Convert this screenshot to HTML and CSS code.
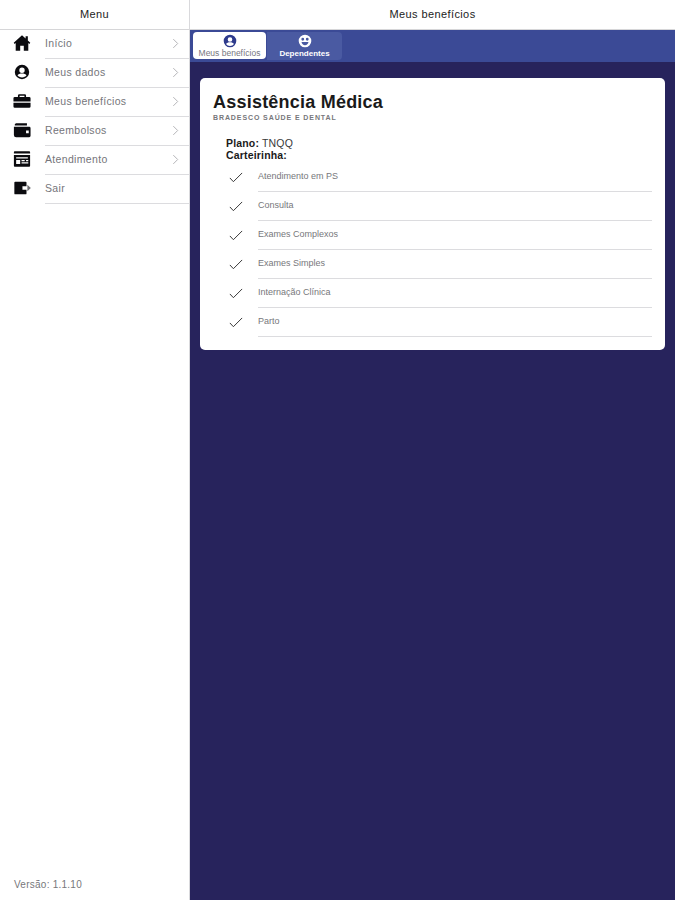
FILE: index.html
```html
<!DOCTYPE html>
<html lang="pt-BR">
<head>
<meta charset="utf-8">
<title>Meus benefícios</title>
<link rel="stylesheet" href="styles.css">
</head>
<body>
<div class="app">
  <aside class="sidebar">
    <header class="bar">Menu</header>
    <nav class="menu">
      <a class="menu-row">
        <svg class="menu-icon" viewBox="0 0 20 20"><path d="M10 1.500 .8 9.800l1 1.200L3 10V18.500h5v-5.500h4v5.500h5V10l1.200 1 1-1.200L16.500 7.200V2.500h-2.500v2.500z"/></svg>
        <span class="menu-body"><span class="menu-text">Início</span><svg class="chev" viewBox="0 0 8 12"><path d="M1.500 1 6.500 6 1.500 11"/></svg></span>
      </a>
      <a class="menu-row">
        <svg class="menu-icon" viewBox="0 0 20 20"><path fill-rule="evenodd" d="M10 2a8 8 0 1 0 0 16 8 8 0 0 0 0-16zm0 3a3 3 0 1 1 0 6 3 3 0 0 1 0-6zm0 11c-2.200 0-4-.9-5-2.400.7-1.400 2.800-2 5-2s4.300.6 5 2C14 15.100 12.200 16 10 16z"/></svg>
        <span class="menu-body"><span class="menu-text">Meus dados</span><svg class="chev" viewBox="0 0 8 12"><path d="M1.500 1 6.500 6 1.500 11"/></svg></span>
      </a>
      <a class="menu-row">
        <svg class="menu-icon" viewBox="0 0 20 20"><path fill-rule="evenodd" d="M7 2.500h6A1.500 1.500 0 0 1 14.500 4V5.500H18A1.500 1.500 0 0 1 19.500 7V10.500H.5V7A1.500 1.500 0 0 1 2 5.500H5.500V4A1.500 1.500 0 0 1 7 2.500zm.3 1.700V5.500h5.400V4.200zM.5 12H19.500v4A1.500 1.500 0 0 1 18 17.500H2A1.500 1.500 0 0 1 .5 16z"/></svg>
        <span class="menu-body"><span class="menu-text">Meus benefícios</span><svg class="chev" viewBox="0 0 8 12"><path d="M1.500 1 6.500 6 1.500 11"/></svg></span>
      </a>
      <a class="menu-row">
        <svg class="menu-icon" viewBox="0 0 20 20"><path fill-rule="evenodd" d="M3.500 2.500H15.500V5H2A2 2 0 0 1 3.500 2.500zM1 6.500H18A1.500 1.500 0 0 1 19.500 8V16.500A1.500 1.500 0 0 1 18 18H3.500A2.500 2.500 0 0 1 1 15.500zM14.500 10.500V13.500H17.500V10.500z"/></svg>
        <span class="menu-body"><span class="menu-text">Reembolsos</span><svg class="chev" viewBox="0 0 8 12"><path d="M1.500 1 6.500 6 1.500 11"/></svg></span>
      </a>
      <a class="menu-row">
        <svg class="menu-icon" viewBox="0 0 20 20"><path fill-rule="evenodd" d="M2 1.500h16a1 1 0 0 1 1 1V4H1V2.500a1 1 0 0 1 1-1zM1 5.500h18V17.500a1 1 0 0 1-1 1H2a1 1 0 0 1-1-1zm2.500 2.500v1.500h13V8zm0 3v4.500h4.500V11zm6 0v1.500h3.500V11zm5 0v1.500H17V11zm-5 2.500V15h7.500v-1.500z"/></svg>
        <span class="menu-body"><span class="menu-text">Atendimento</span><svg class="chev" viewBox="0 0 8 12"><path d="M1.500 1 6.500 6 1.500 11"/></svg></span>
      </a>
      <a class="menu-row">
        <svg class="menu-icon" viewBox="0 0 20 20"><path fill-rule="evenodd" d="M2.500 3H14a1 1 0 0 1 1 1V8H10.500V12H15V16a1 1 0 0 1-1 1H2.500a1 1 0 0 1-1-1V4a1 1 0 0 1 1-1z"/><path class="exit-arrow" d="M16 6.500 19.800 10 16 13.500z"/></svg>
        <span class="menu-body"><span class="menu-text">Sair</span></span>
      </a>
    </nav>
    <p class="version">Versão: 1.1.10</p>
  </aside>
  <main class="main">
    <header class="bar">Meus benefícios</header>
    <div class="tabs">
      <a class="tab tab-active">
        <svg class="tab-icon" viewBox="0 0 20 20"><path fill-rule="evenodd" d="M10 1a9 9 0 1 0 0 18 9 9 0 0 0 0-18zm0 3.500a3.300 3.300 0 1 1 0 6.600 3.300 3.300 0 0 1 0-6.600zm0 12.500c-2.400 0-4.500-1.100-5.600-2.800.8-1.500 3.200-2.300 5.600-2.300s4.800.8 5.600 2.300C14.500 15.900 12.400 17 10 17z"/></svg>
        <span>Meus benefícios</span>
      </a>
      <a class="tab tab-other">
        <svg class="tab-icon" viewBox="0 0 20 20"><path fill-rule="evenodd" d="M10 1a9 9 0 1 0 0 18 9 9 0 0 0 0-18zM6.800 5.500a2 2 0 1 1 0 4 2 2 0 0 1 0-4zm6.400 0a2 2 0 1 1 0 4 2 2 0 0 1 0-4zM5 11.500h10C14.600 14.400 12.500 16 10 16s-4.600-1.600-5-4.500z"/></svg>
        <span>Dependentes</span>
      </a>
    </div>
    <div class="content">
      <section class="card">
        <h1 class="title">Assistência Médica</h1>
        <p class="subtitle">BRADESCO SAÚDE E DENTAL</p>
        <div class="info">
          <p><b>Plano:</b> TNQQ</p>
          <p><b>Carteirinha:</b></p>
        </div>
        <ul class="list">
          <li class="item"><svg class="check" viewBox="0 0 16 12"><path d="M1 6.500 5 10.800 15 .8"/></svg><span class="item-text">Atendimento em PS</span></li>
          <li class="item"><svg class="check" viewBox="0 0 16 12"><path d="M1 6.500 5 10.800 15 .8"/></svg><span class="item-text">Consulta</span></li>
          <li class="item"><svg class="check" viewBox="0 0 16 12"><path d="M1 6.500 5 10.800 15 .8"/></svg><span class="item-text">Exames Complexos</span></li>
          <li class="item"><svg class="check" viewBox="0 0 16 12"><path d="M1 6.500 5 10.800 15 .8"/></svg><span class="item-text">Exames Simples</span></li>
          <li class="item"><svg class="check" viewBox="0 0 16 12"><path d="M1 6.500 5 10.800 15 .8"/></svg><span class="item-text">Internação Clínica</span></li>
          <li class="item"><svg class="check" viewBox="0 0 16 12"><path d="M1 6.500 5 10.800 15 .8"/></svg><span class="item-text">Parto</span></li>
        </ul>
      </section>
    </div>
  </main>
</div>
</body>
</html>
```
FILE: styles.css
```css
* { box-sizing: border-box; }
html, body { margin: 0; height: 100%; }
body { font-family: "Liberation Sans", Arial, sans-serif; background: #fff; color: #111; }
p, h1, ul { margin: 0; padding: 0; }
.app { display: flex; height: 900px; overflow: hidden; }
.sidebar { width: 190px; flex: none; display: flex; flex-direction: column; background: #fff; border-right: 1px solid #d9d9dc; }
.main { flex: 1; display: flex; flex-direction: column; background: #27235c; min-width: 0; }
.bar { height: 30px; flex: none; display: flex; align-items: center; justify-content: center; font-size: 11px; color: #1c1c1c; background: #fff; border-bottom: 1px solid #d6d6d8; padding-bottom: 1px; letter-spacing: .4px; }
.menu { display: flex; flex-direction: column; flex: 1; }
.menu-row { display: flex; height: 29px; align-items: stretch; }
.menu-icon { width: 18px; height: 18px; flex: none; margin: 4px 0 0 13px; fill: #0b0b0f; }
.exit-arrow { fill: #6c6c70; }
.menu-body { flex: 1; margin-left: 14px; display: flex; align-items: center; justify-content: space-between; border-bottom: 1px solid #dcdcdf; padding: 0 10px 2px 0; }
.menu-text { font-size: 10.5px; color: #75757a; letter-spacing: .33px; }
.chev { width: 7px; height: 11px; fill: none; stroke: #a9a9ad; stroke-width: 1; }
.version { font-size: 10px; color: #77777b; padding: 0 0 10px 14px; letter-spacing: .25px; }
.tabs { height: 32px; flex: none; display: flex; background: #3b4a96; padding: 2px 0 0 3px; gap: 1px; }
.tab { display: flex; flex-direction: column; align-items: center; padding-top: 2px; line-height: 9px; white-space: nowrap; }
.tab-icon { width: 14px; height: 14px; flex: none; margin-bottom: 1px; }
.tab-active { width: 73px; height: 27px; background: #fff; border-radius: 4px; color: #77777f; font-size: 8.5px; }
.tab-active .tab-icon { fill: #2d3a8c; }
.tab-other { width: 75px; height: 28px; background: #4a5aa2; border-radius: 0 4px 4px 0; color: #fff; font-weight: bold; font-size: 8px; }
.tab-other .tab-icon { fill: #fff; }
.content { padding: 16px 10px 0; }
.card { height: 272px; background: #fff; border-radius: 5px; padding: 14px 13px 0 13px; }
.title { font-size: 18px; line-height: 20px; font-weight: bold; color: #1a1a1a; letter-spacing: .22px; }
.subtitle { font-size: 7px; line-height: 10px; margin-top: 1px; font-weight: bold; color: #77777b; letter-spacing: .9px; }
.info { margin-top: 14px; padding-left: 13px; font-size: 10.5px; line-height: 12px; color: #3a3a3a; letter-spacing: .17px; }
.info b { color: #1a1a1a; }
.list { list-style: none; margin-top: 2px; }
.item { display: flex; height: 29px; align-items: stretch; }
.check { width: 14px; height: 11px; flex: none; margin: 9px 0 0 16px; fill: none; stroke: #333; stroke-width: 1.1; }
.item-text { flex: 1; margin-left: 15px; display: flex; align-items: center; padding-bottom: 2px; font-size: 9px; color: #77777b; border-bottom: 1px solid #dcdcdf; }
```
